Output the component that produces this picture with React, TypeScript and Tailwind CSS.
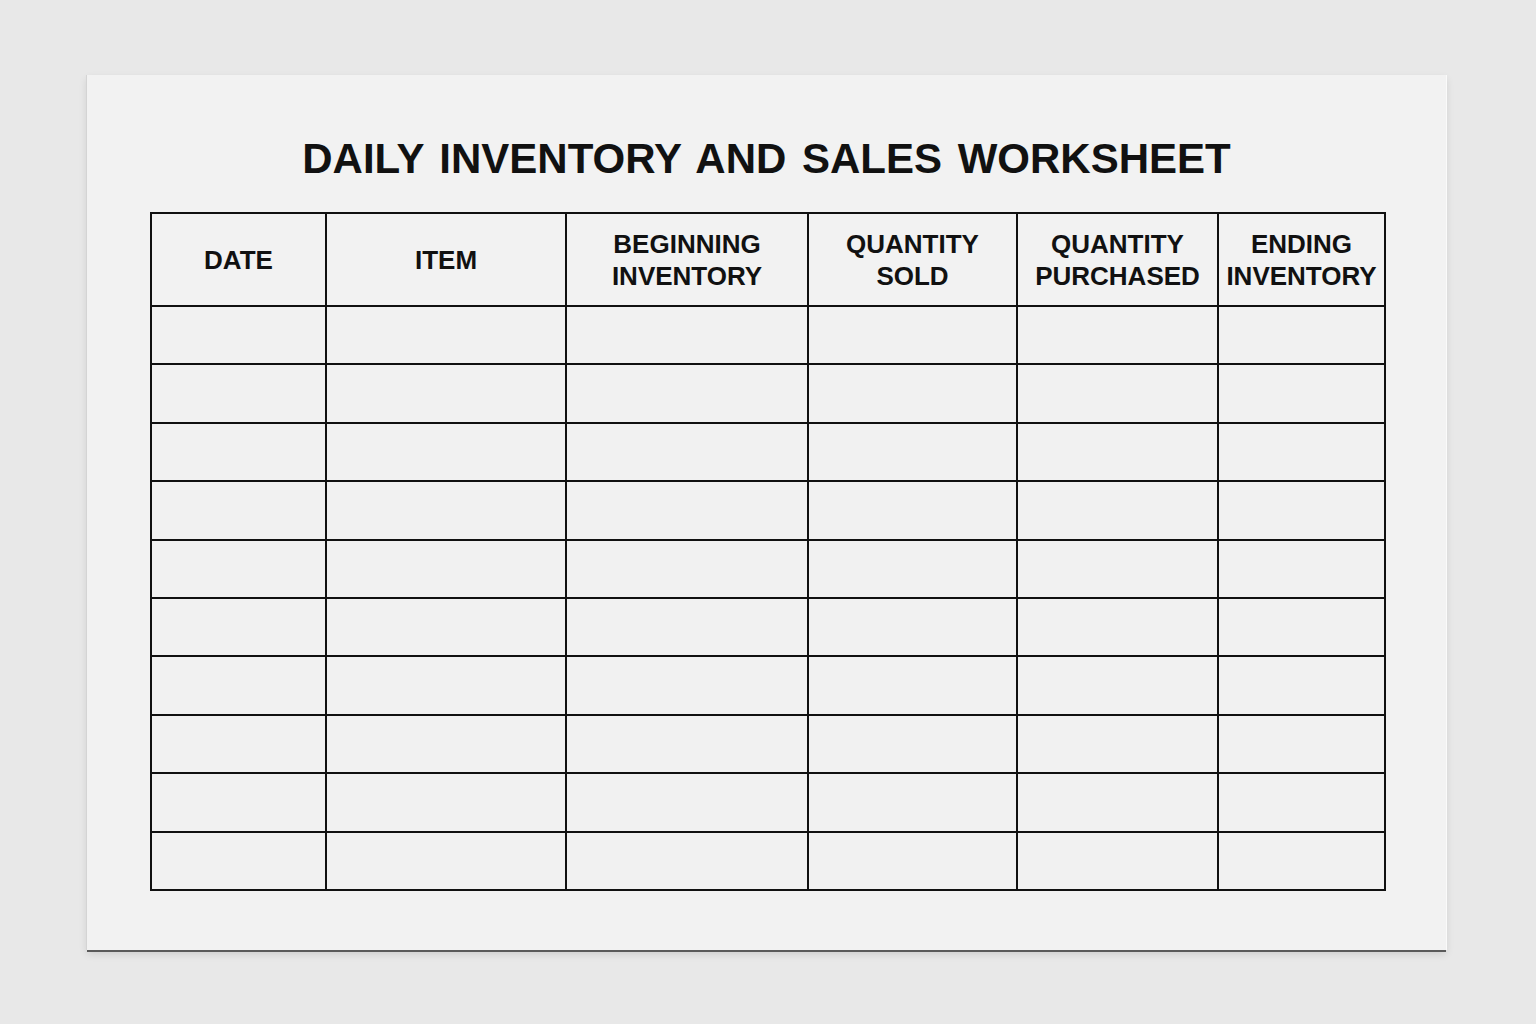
const columns = [
	['DATE'],
	['ITEM'],
	['BEGINNING', 'INVENTORY'],
	['QUANTITY', 'SOLD'],
	['QUANTITY', 'PURCHASED'],
	['ENDING', 'INVENTORY'],
]

const rowCount = 10

export default function App() {
	return (
		<div className="min-h-[1024px] w-full bg-[#e8e8e8] pl-[87px] pt-[75px] font-['Liberation_Sans',Arial,sans-serif] text-[#111]">
			{/* Sheet of paper */}
			<div className="flex h-[875px] w-[1359px] flex-col items-center bg-[#f2f2f2] pt-[63px] shadow-[-1px_0_0_#d4d4d4,1px_0_0_#fafafa,0_2px_0_#5a5a5a,0_4px_8px_rgba(0,0,0,0.12)]">
				<h1 className="text-[42px] leading-[42px] font-bold [word-spacing:4px]">
					DAILY INVENTORY AND SALES WORKSHEET
				</h1>

				{/* Worksheet grid */}
				<div className="mt-[32px] ml-[3px] grid grid-cols-[173px_238px_240px_207px_199px_165px] grid-rows-[91px_repeat(10,56.4px)] gap-[2px] border-2 border-[#111] bg-[#111]">
					{columns.map((lines) => (
						<div
							key={lines.join(' ')}
							className="flex flex-col items-center justify-center bg-[#f2f2f2] text-center text-[26px] leading-[32px] font-bold"
						>
							{lines.map((line) => (
								<span key={line}>{line}</span>
							))}
						</div>
					))}

					{Array.from({ length: rowCount * columns.length }).map((_, i) => (
						<div key={i} className="bg-[#f1f1f1]" />
					))}
				</div>
			</div>
		</div>
	)
}
